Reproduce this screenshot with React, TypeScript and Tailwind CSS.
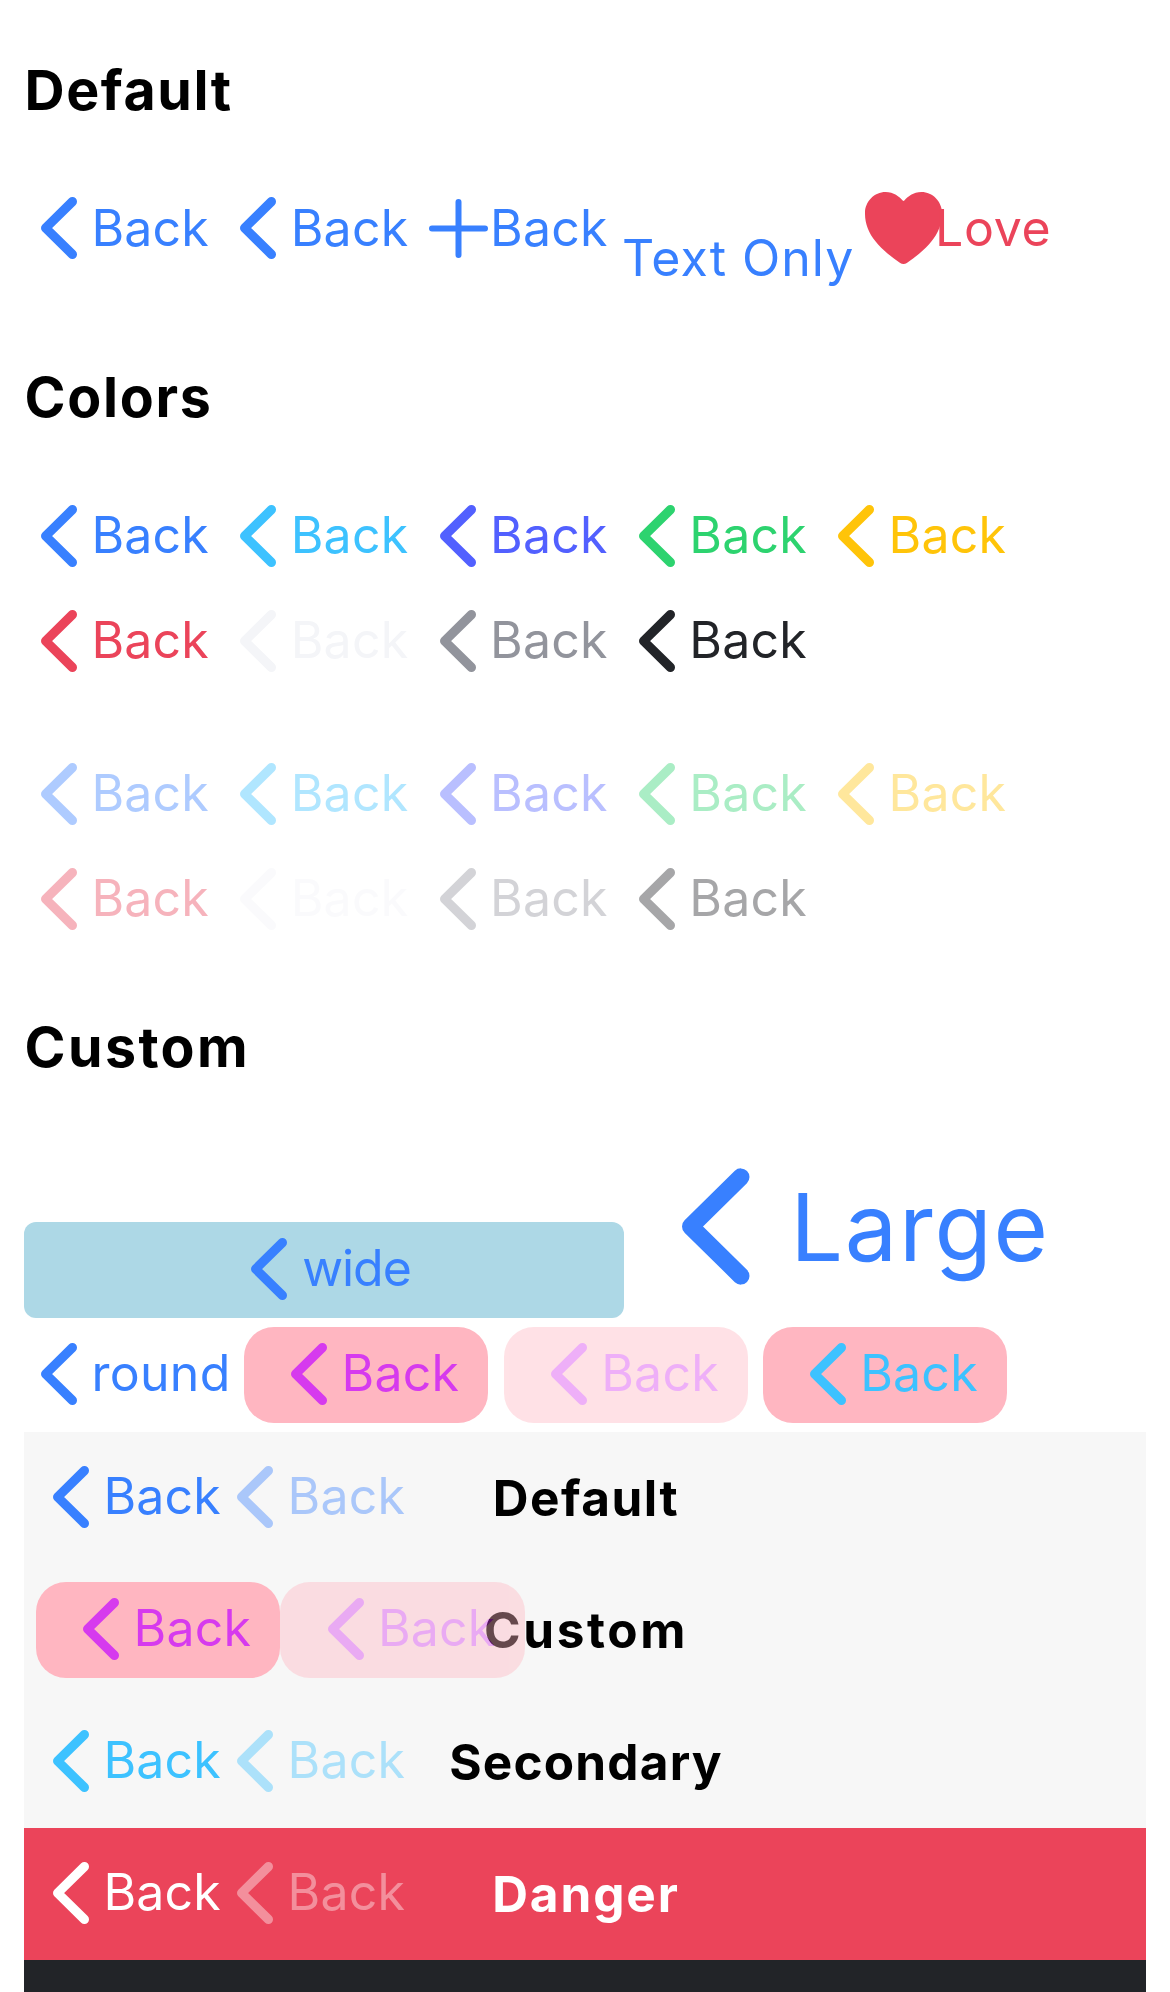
import type { ReactNode } from 'react';
import clsx from 'clsx';

function Chevron({ className = 'h-[62px] w-[36px]' }: { className?: string }) {
  return (
    <svg viewBox="0 0 36 62" fill="none" stroke="currentColor" strokeWidth="9.2" strokeLinecap="round" strokeLinejoin="round" className={clsx('shrink-0', className)}>
      <path d="M31.4 4.6 4.6 31l26.8 26.4" />
    </svg>
  );
}

function Label({ children, className = 'pb-1 tracking-[0.2px]' }: { children: ReactNode; className?: string }) {
  return <span className={clsx('text-[50px] leading-[60px] whitespace-nowrap', className)}>{children}</span>;
}

function Back({ className, labelClass, label = 'Back' }: { className?: string; labelClass?: string; label?: string }) {
  return (
    <div className={clsx('flex h-24 shrink-0 items-center', className)}>
      <Chevron className="mb-0.5 mr-[14.3px] h-[62px] w-[36px]" />
      <Label className={labelClass}>{label}</Label>
    </div>
  );
}

function Heading({ children, className }: { children: ReactNode; className?: string }) {
  return <h2 className={clsx('pl-[24.5px] text-[55.5px] leading-[66px] font-bold text-black', className)}>{children}</h2>;
}

const firstColors = ['text-[#3880ff]', 'text-[#3dc2ff]', 'text-[#5260ff]', 'text-[#2dd36f]', 'text-[#ffc409]'];
const secondColors = ['text-[#eb445a]', 'text-[#f4f5f8]', 'text-[#92949c]', 'text-[#222428]'];

function ColorRows({ className, itemClass }: { className?: string; itemClass?: string }) {
  return (
    <div className={clsx('flex flex-col gap-[9px] pl-6', className)}>
      {[firstColors, secondColors].map((row, i) => (
        <div key={i} className="flex">
          {row.map((color) => (
            <Back key={color} className={clsx('w-[199.3px] pl-[17.1px]', color, itemClass)} />
          ))}
        </div>
      ))}
    </div>
  );
}

function Toolbar({ title, titleClass, className, children }: { title?: string; titleClass?: string; className?: string; children?: ReactNode }) {
  return (
    <div className={clsx('relative flex h-[132px] items-center pl-3', className)}>
      <div className={clsx('absolute inset-0 pl-[2px] text-center text-[49.5px] leading-[132px] font-bold', titleClass)}>{title}</div>
      <div className="relative flex">{children}</div>
    </div>
  );
}

const pink = 'w-[244.3px] rounded-[30px] bg-[#ffb6c1] pl-[47.3px]';
const plain = 'w-[184.2px] pl-[17.1px]';

export default function App() {
  return (
    <div className="h-[1992px] w-[1170px] overflow-hidden bg-white pt-[57px] font-['Inter',sans-serif]">
      <Heading className="tracking-[1.6px]">Default</Heading>
      <div className="mt-[58px] flex pl-6 text-[#3880ff]">
        <Back className="w-[199.3px] pl-[17.1px]" labelClass="pb-[2px] tracking-[0.2px]" />
        <Back className="w-[199.3px] pl-[17.1px]" labelClass="pb-[2px] tracking-[0.2px]" />
        <div className="flex h-24 w-[199.4px] items-center pl-[6.2px]">
          <svg viewBox="0 0 59 59" fill="none" stroke="currentColor" strokeWidth="6" strokeLinecap="round" className="mr-[2.2px] mb-[2px] h-[59px] w-[59px] shrink-0">
            <path d="M29.5 3v53M3 29.5h53" />
          </svg>
          <Label className="pb-[2px] tracking-[0.2px]">Back</Label>
        </div>
        <div className="h-24 w-[243px] shrink-0 pt-[47px]">
          <Label className="block tracking-[1px]">Text Only</Label>
        </div>
        <div className="flex h-24 items-center text-[#eb445a]">
          <svg viewBox="48 64 416 384" fill="currentColor" preserveAspectRatio="none" className="mr-[-7px] mb-[2px] h-[72px] w-[77px] shrink-0">
            <path d="M256 448a32 32 0 01-18-5.57c-78.59-53.35-112.62-89.93-131.39-112.8-40-48.75-59.15-98.8-58.61-153C48.63 114.52 98.46 64 159.08 64c44.08 0 74.61 24.83 92.39 45.51a6 6 0 009.06 0C278.31 88.81 308.84 64 352.92 64c60.62 0 110.45 50.52 111.08 112.64.54 54.21-18.63 104.26-58.61 153-18.77 22.87-52.8 59.45-131.39 112.8a32 32 0 01-18 5.56z" />
          </svg>
          <Label className="pb-[2px] tracking-[0.7px]">Love</Label>
        </div>
      </div>

      <Heading className="mt-[87px] tracking-[1.7px]">Colors</Heading>
      <ColorRows className="mt-[59px]" />
      <ColorRows className="mt-[57px]" itemClass="opacity-40" />

      <Heading className="mt-[66px] tracking-[2.4px]">Custom</Heading>
      <div className="mt-[55px] flex items-end pl-6 text-[#3880ff]">
        <Back label="wide" className="w-[600px] rounded-xl bg-[#add8e6] pl-[227px]" labelClass="pb-1 pl-[1px] tracking-[-1.1px]" />
        <div className="flex h-[183px] items-center pl-[58px]">
          <Chevron className="mr-[40.8px] h-[117px] w-[67.5px]" />
          <span className="text-[93.5px] leading-[120px] tracking-[1.7px]">Large</span>
        </div>
      </div>
      <div className="mt-[9px] flex pl-6">
        <Back label="round" className="w-[220px] pl-[17.1px] text-[#3880ff]" labelClass="pb-1 tracking-[0.3px]" />
        <Back className={clsx(pink, 'text-[#d63aee]')} />
        <Back className={clsx(pink, 'mr-[14.7px] ml-[15.3px] text-[#d63aee] opacity-40')} />
        <Back className={clsx(pink, 'text-[#3dc2ff]')} />
      </div>

      <div className="mt-[9px] mr-6 ml-6">
        <Toolbar title="Default" titleClass="tracking-[1.5px] text-black" className="bg-[#f7f7f7] text-[#3880ff]">
          <Back className={plain} />
          <Back className={clsx(plain, 'opacity-40')} />
        </Toolbar>
        <Toolbar title="Custom" titleClass="tracking-[2.6px] text-black" className="bg-[#f7f7f7] text-[#d63aee]">
          <Back className={pink} />
          <Back className={clsx(pink, 'opacity-40')} />
        </Toolbar>
        <Toolbar title="Secondary" titleClass="tracking-[1.2px] text-black" className="bg-[#f7f7f7] text-[#3dc2ff]">
          <Back className={plain} />
          <Back className={clsx(plain, 'opacity-40')} />
        </Toolbar>
        <Toolbar title="Danger" titleClass="tracking-[1.9px]" className="bg-[#eb445a] text-white">
          <Back className={plain} />
          <Back className={clsx(plain, 'opacity-40')} />
        </Toolbar>
        <Toolbar className="bg-[#222428]" />
      </div>
    </div>
  );
}
